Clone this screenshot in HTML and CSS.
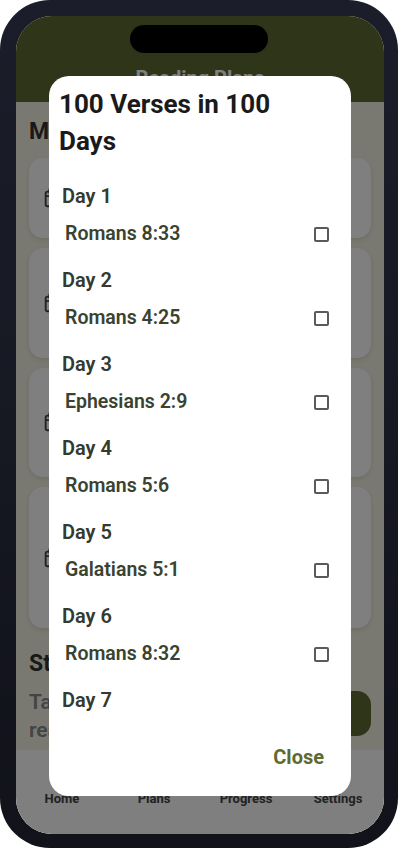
FILE: index.html
```html
<!DOCTYPE html>
<html lang="en">
<head>
    <meta charset="UTF-8">
    <meta name="viewport" content="width=device-width, initial-scale=1.0">
    <title>Reading Plans</title>
    <link rel="stylesheet" href="styles.css">
</head>
<body>
    <div class="phone">
        <div class="screen">
            <div class="app-header">Reading Plans</div>

            <div class="app-content">
                <h2 class="section-title">My Plans</h2>
                <div class="plan-list">
                    <div class="plan-card card-short">
                        <svg class="plan-icon" viewBox="0 0 24 24"><rect x="4" y="5" width="16" height="16" rx="2"/><path d="M8 2v5M16 2v5M4 10h16"/></svg>
                    </div>
                    <div class="plan-card">
                        <svg class="plan-icon" viewBox="0 0 24 24"><rect x="4" y="5" width="16" height="16" rx="2"/><path d="M8 2v5M16 2v5M4 10h16"/></svg>
                    </div>
                    <div class="plan-card">
                        <svg class="plan-icon" viewBox="0 0 24 24"><rect x="4" y="5" width="16" height="16" rx="2"/><path d="M8 2v5M16 2v5M4 10h16"/></svg>
                    </div>
                    <div class="plan-card card-tall">
                        <svg class="plan-icon" viewBox="0 0 24 24"><rect x="4" y="5" width="16" height="16" rx="2"/><path d="M8 2v5M16 2v5M4 10h16"/></svg>
                    </div>
                </div>

                <h2 class="section-title start-title">Start</h2>
                <div class="start-row">
                    <p class="start-text">Take<br>read</p>
                    <div class="start-button"></div>
                </div>
            </div>

            <div class="tab-bar">
                <div class="tab">Home</div>
                <div class="tab">Plans</div>
                <div class="tab">Progress</div>
                <div class="tab">Settings</div>
            </div>

            <div class="overlay"></div>
        </div>

        <div class="notch"></div>

        <div class="modal">
            <h1 class="modal-title">100 Verses in 100 Days</h1>
            <div class="day-list">
                <div class="day">
                    <div class="day-label">Day 1</div>
                    <div class="verse-row"><span class="verse">Romans 8:33</span><span class="check"></span></div>
                </div>
                <div class="day">
                    <div class="day-label">Day 2</div>
                    <div class="verse-row"><span class="verse">Romans 4:25</span><span class="check"></span></div>
                </div>
                <div class="day">
                    <div class="day-label">Day 3</div>
                    <div class="verse-row"><span class="verse">Ephesians 2:9</span><span class="check"></span></div>
                </div>
                <div class="day">
                    <div class="day-label">Day 4</div>
                    <div class="verse-row"><span class="verse">Romans 5:6</span><span class="check"></span></div>
                </div>
                <div class="day">
                    <div class="day-label">Day 5</div>
                    <div class="verse-row"><span class="verse">Galatians 5:1</span><span class="check"></span></div>
                </div>
                <div class="day">
                    <div class="day-label">Day 6</div>
                    <div class="verse-row"><span class="verse">Romans 8:32</span><span class="check"></span></div>
                </div>
                <div class="day">
                    <div class="day-label">Day 7</div>
                </div>
            </div>
            <div class="modal-footer">
                <span class="close-button">Close</span>
            </div>
        </div>
    </div>
</body>
</html>
```

FILE: styles.css
```css
body {
    font-family: Roboto, 'Liberation Sans', sans-serif;
    margin: 0;
    padding: 0;
    background-color: white;
}
.phone {
    position: relative;
    width: 398px;
    height: 848px;
    padding: 16px 14px 14px 16px;
    box-sizing: border-box;
    background: linear-gradient(#1b1e2a, #11121a);
    border-radius: 50px;
    overflow: hidden;
}
.screen {
    position: relative;
    height: 100%;
    display: flex;
    flex-direction: column;
    background-color: #f3f2e4;
    border-radius: 36px;
    overflow: hidden;
}
.app-header {
    height: 86px;
    padding-top: 50px;
    box-sizing: border-box;
    background-color: #5e6a30;
    color: white;
    font-size: 20px;
    font-weight: 700;
    text-align: center;
}
.app-content {
    flex: 1;
    padding: 16px 13px 0;
}
.section-title {
    font-size: 23px;
    font-weight: 700;
    line-height: 28px;
    margin: 0 0 12px 0;
    color: #333;
}
.plan-list {
    display: flex;
    flex-direction: column;
    gap: 10px;
}
.plan-card {
    display: flex;
    align-items: center;
    height: 109.5px;
    padding-left: 13px;
    box-sizing: border-box;
    background-color: white;
    border-radius: 14px;
    box-shadow: 0 2px 5px rgba(0, 0, 0, 0.1);
}
.card-short {
    height: 80px;
}
.card-tall {
    height: 141px;
}
.plan-icon {
    width: 22px;
    height: 22px;
    fill: none;
    stroke: #444;
    stroke-width: 2;
}
.start-title {
    margin: 22px 0 10px 0;
}
.start-row {
    display: flex;
    justify-content: space-between;
    align-items: flex-start;
}
.start-text {
    margin: 0;
    font-size: 21px;
    font-weight: 600;
    line-height: 28px;
    color: #888;
}
.start-button {
    width: 120px;
    height: 45px;
    margin-top: 3px;
    background-color: #5e6a30;
    border-radius: 14px;
}
.tab-bar {
    height: 84px;
    display: grid;
    grid-template-columns: repeat(4, 1fr);
    background-color: white;
}
.tab {
    padding-top: 41px;
    font-size: 13px;
    font-weight: 700;
    text-align: center;
    color: #444;
}
.overlay {
    position: absolute;
    top: 0;
    right: 0;
    bottom: 0;
    left: 0;
    background-color: rgba(0, 0, 0, 0.5);
}
.notch {
    position: absolute;
    top: 25px;
    left: 130px;
    width: 138px;
    height: 28px;
    background-color: black;
    border-radius: 14px;
}
.modal {
    position: absolute;
    top: 76px;
    left: 49px;
    width: 302px;
    height: 720px;
    display: flex;
    flex-direction: column;
    box-sizing: border-box;
    padding: 10px;
    background-color: white;
    border-radius: 20px;
}
.modal-title {
    font-size: 26px;
    font-weight: 700;
    line-height: 37px;
    margin: 0 30px 17px 0;
    color: #1a1a1a;
}
.day-list {
    flex: 1;
    overflow: hidden;
}
.day {
    height: 84px;
    padding: 0 3px;
    box-sizing: border-box;
}
.day-label {
    font-size: 20px;
    font-weight: 600;
    line-height: 38px;
    color: #343a2c;
}
.verse-row {
    display: flex;
    justify-content: space-between;
    align-items: center;
    height: 38px;
    padding: 0 9px 0 3px;
}
.verse {
    font-size: 19.5px;
    line-height: 24px;
    font-weight: 600;
    color: #3a4230;
}
.check {
    width: 15px;
    height: 15px;
    box-sizing: border-box;
    border: 2px solid #5a5a5a;
    border-radius: 2px;
}
.modal-footer {
    display: flex;
    justify-content: flex-end;
    padding: 0 17px 17px 0;
}
.close-button {
    font-size: 20px;
    font-weight: 700;
    color: #5e6a30;
}
```
